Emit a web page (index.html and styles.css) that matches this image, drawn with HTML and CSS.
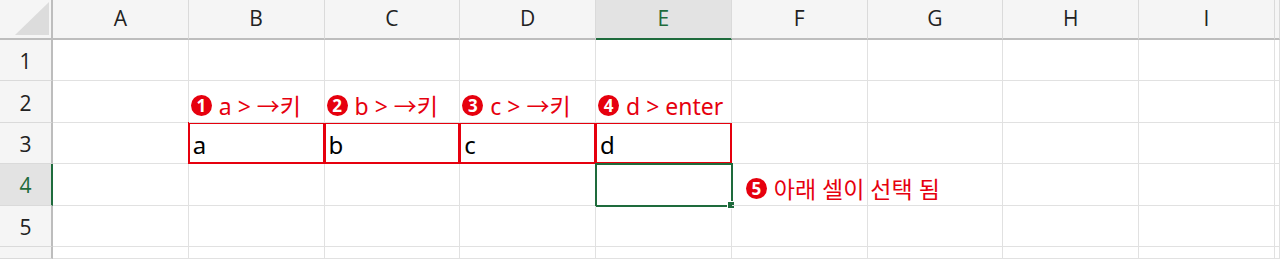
FILE: index.html
```html
<!DOCTYPE html>
<html lang="ko">
<head>
    <meta charset="UTF-8">
    <meta name="viewport" content="width=device-width, initial-scale=1.0">
    <title>Sheet</title>
    <link rel="stylesheet" href="styles.css">
</head>
<body>
    <div class="sheet" id="sheet"></div>

    <script>
        const columns = ["A", "B", "C", "D", "E", "F", "G", "H", "I", ""];
        const rowCount = 6;

        // cell values, keyed by "B3" etc.
        const cells = {
            B2: '<span class="num">1</span>a &gt; →키',
            C2: '<span class="num">2</span>b &gt; →키',
            D2: '<span class="num">3</span>c &gt; →키',
            E2: '<span class="num">4</span>d &gt; enter',
            B3: 'a',
            C3: 'b',
            D3: 'c',
            E3: 'd',
            F4: '<span class="num">5</span>아래 셀이 선택 됨'
        };
        const notes = ["B2", "C2", "D2", "E2", "F4"];
        const boxed = ["B3", "C3", "D3", "E3"];
        const active = "E4";

        const sheet = document.getElementById("sheet");

        // header row
        const corner = document.createElement("div");
        corner.className = "corner";
        sheet.appendChild(corner);
        columns.forEach(col => {
            const head = document.createElement("div");
            head.className = "col-head";
            if (col === active[0]) head.classList.add("current");
            head.innerText = col;
            sheet.appendChild(head);
        });

        for (let r = 1; r <= rowCount; r++) {
            const rowHead = document.createElement("div");
            rowHead.className = "row-head";
            if (r === Number(active[1])) rowHead.classList.add("current");
            rowHead.innerText = r <= 5 ? r : "";
            sheet.appendChild(rowHead);

            columns.forEach(col => {
                const key = col + r;
                const cell = document.createElement("div");
                cell.className = "cell";
                if (cells[key]) cell.innerHTML = `<span class="value">${cells[key]}</span>`;
                if (notes.includes(key)) cell.classList.add("note");
                if (key === "F4") cell.classList.add("indent");
                if (boxed.includes(key)) cell.classList.add("boxed");
                if (key === active) cell.classList.add("active");
                sheet.appendChild(cell);
            });
        }
    </script>
</body>
</html>
```

FILE: styles.css
```css
body {
    margin: 0;
    background-color: #fff;
    overflow: hidden;
    font-family: "Noto Sans", "Noto Sans CJK KR", sans-serif;
}

.sheet {
    display: grid;
    width: 1280px;
    height: 259px;
    overflow: hidden;
    grid-template-columns: 53px repeat(9, 135.75px) 1fr;
    grid-template-rows: 40px repeat(5, 41.4px) 1fr;
}

.corner {
    position: relative;
    background-color: #f5f5f5;
    border-right: 2px solid #bdbdbd;
    border-bottom: 2px solid #bdbdbd;
    box-sizing: border-box;
}

.corner::after {
    content: "";
    position: absolute;
    right: 2px;
    bottom: 3px;
    width: 34px;
    height: 33px;
    background-color: #dcdcdc;
    clip-path: polygon(100% 0, 100% 100%, 0 100%);
}

.col-head {
    display: flex;
    align-items: center;
    justify-content: center;
    background-color: #f5f5f5;
    border-right: 1px solid #dadada;
    border-bottom: 2px solid #bdbdbd;
    box-sizing: border-box;
    font-family: "Open Sans", sans-serif;
    font-size: 21px;
    color: #222;
    padding-bottom: 2px;
}

.col-head.current {
    background-color: #e3e3e3;
    border-bottom-color: #1e6b3c;
    color: #1e6b3c;
}

.row-head {
    display: flex;
    align-items: center;
    justify-content: center;
    background-color: #f5f5f5;
    border-right: 2px solid #bdbdbd;
    border-bottom: 1px solid #dadada;
    box-sizing: border-box;
    font-family: "Open Sans", sans-serif;
    font-size: 21px;
    color: #222;
    padding-top: 2px;
}

.row-head.current {
    background-color: #e3e3e3;
    border-right-color: #1e6b3c;
    color: #1e6b3c;
}

.cell {
    position: relative;
    display: flex;
    align-items: flex-end;
    border-right: 1px solid #e1e1e1;
    border-bottom: 1px solid #e1e1e1;
    box-sizing: border-box;
    padding: 0 0 3px 4px;
    font-size: 24px;
    line-height: 30px;
    color: #000;
    white-space: nowrap;
    overflow: visible;
}

.value {
    display: flex;
    align-items: center;
    flex-shrink: 0;
}

.note {
    z-index: 2;
    padding: 0 0 2px 2px;
    font-size: 23px;
    line-height: 28px;
    color: #e6000e;
}

.note.indent {
    padding-left: 14px;
}

.num {
    display: inline-flex;
    align-items: center;
    justify-content: center;
    flex-shrink: 0;
    width: 21px;
    height: 21px;
    margin-right: 7px;
    border-radius: 50%;
    background-color: #e6000e;
    color: #fff;
    font-family: "Open Sans", sans-serif;
    font-weight: 700;
    font-size: 17px;
    line-height: 1;
}

.boxed::after {
    content: "";
    position: absolute;
    left: -1px;
    top: -1px;
    right: -1px;
    bottom: -1px;
    border: 2px solid #e6000e;
}

.active::after {
    content: "";
    position: absolute;
    left: -1px;
    top: -1px;
    right: -2px;
    bottom: -2px;
    border: 2px solid #1e6b3c;
}

.active::before {
    content: "";
    position: absolute;
    right: -4px;
    bottom: -4px;
    width: 6px;
    height: 6px;
    background-color: #1e6b3c;
    border: 1px solid #fff;
    z-index: 1;
}
```
